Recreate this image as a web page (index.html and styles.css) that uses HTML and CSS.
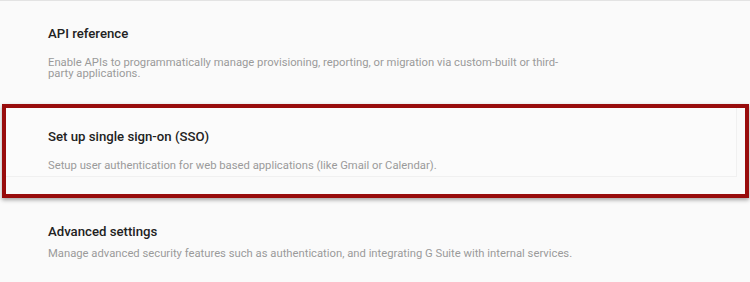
FILE: index.html
```html
<!DOCTYPE html>
<html lang="en">
<head>
    <meta charset="UTF-8">
    <meta name="viewport" content="width=device-width, initial-scale=1.0">
    <title>Security settings</title>
    <link rel="stylesheet" href="styles.css">
</head>
<body>
<div class="list">

    <div class="item first">
        <div class="item-title">API reference</div>
        <div class="item-desc">Enable APIs to programmatically manage provisioning, reporting, or migration via custom-built or third-party applications.</div>
    </div>

    <div class="highlight">
        <div class="card">
            <div class="item-title">Set up single sign-on (SSO)</div>
            <div class="item-desc">Setup user authentication for web based applications (like Gmail or Calendar).</div>
        </div>
    </div>

    <div class="item last">
        <div class="item-title">Advanced settings</div>
        <div class="item-desc">Manage advanced security features such as authentication, and integrating G Suite with internal services.</div>
    </div>

</div>
</body>
</html>
```

FILE: styles.css
```css
body {
    font-family: Roboto, "Liberation Sans", Arial, sans-serif;
    margin: 0;
    padding: 0;
    background-color: #fafafa;
}

.list {
    border-top: 1px solid #e3e3e3;
}

.item {
    padding: 25px 48px 25px 48px;
}

.item-title {
    font-size: 13.2px;
    font-weight: 500;
    line-height: 16px;
    color: #222222;
}

.item-desc {
    font-size: 11.25px;
    line-height: 11px;
    color: #9a9a9a;
    margin-top: 15px;
    max-width: 530px;
}

.highlight {
    margin: 0 1px 0 2px;
    border: 4px solid #980c0c;
    padding: 0 8px 17px 0;
    box-shadow: 0 2px 4px rgba(0, 0, 0, 0.35);
}

.card {
    background-color: #fbfbfb;
    border-right: 1px solid #f0f0f0;
    border-bottom: 1px solid #f0f0f0;
    padding: 21px 42px 5px 42px;
}

.card .item-desc {
    max-width: none;
}

.item.last {
    padding-top: 26px;
}

.item.last .item-desc {
    max-width: none;
    margin-top: 8px;
}
```
